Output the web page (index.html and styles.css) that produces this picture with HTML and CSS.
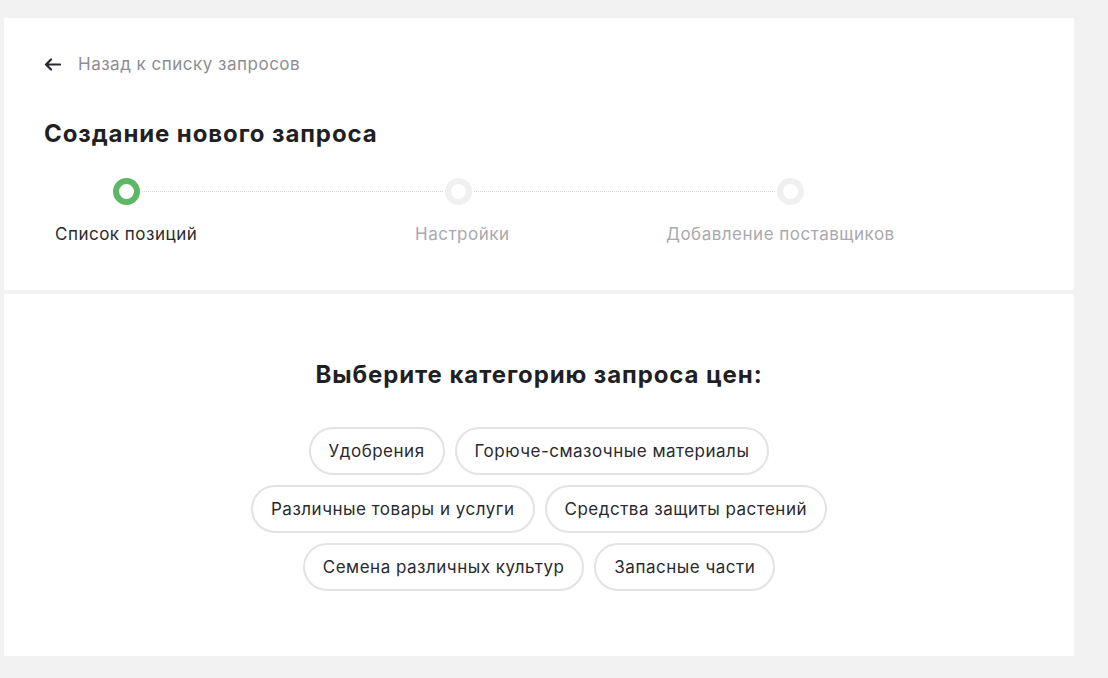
FILE: index.html
```html
<!DOCTYPE html>
<html lang="ru">
<head>
    <meta charset="UTF-8">
    <meta name="viewport" content="width=device-width, initial-scale=1.0">
    <title>Создание нового запроса</title>
    <link rel="stylesheet" href="styles.css">
</head>
<body>
    <div class="page">
        <div class="card card-top">
            <a class="back-link" href="#">
                <svg class="back-icon" width="17" height="13" viewBox="0 0 17 13">
                    <path d="M16 6.5H2M7 1.5L2 6.5l5 5" fill="none" stroke="#2b2533" stroke-width="2.2" stroke-linecap="round" stroke-linejoin="round"/>
                </svg>
                <span>Назад к списку запросов</span>
            </a>
            <h1 class="title">Создание нового запроса</h1>
            <div class="stepper">
                <div class="steps-track">
                    <span class="dot dot-active"></span>
                    <span class="track-line"></span>
                    <span class="dot"></span>
                    <span class="track-line"></span>
                    <span class="dot"></span>
                </div>
                <div class="steps-labels">
                    <span class="step-label step-label-active">Список позиций</span>
                    <span class="step-label">Настройки</span>
                    <span class="step-label">Добавление поставщиков</span>
                </div>
            </div>
        </div>

        <div class="card card-main">
            <h2 class="subtitle">Выберите категорию запроса цен:</h2>
            <div class="chips">
                <button class="chip">Удобрения</button>
                <button class="chip">Горюче-смазочные материалы</button>
                <button class="chip">Различные товары и услуги</button>
                <button class="chip">Средства защиты растений</button>
                <button class="chip">Семена различных культур</button>
                <button class="chip">Запасные части</button>
            </div>
        </div>
    </div>
</body>
</html>
```

FILE: styles.css
```css
body {
    margin: 0;
    background-color: #f2f2f2;
    font-family: Inter, "Noto Sans", sans-serif;
    color: #2a2a2e;
}
.page {
    width: 1070px;
    padding: 18px 0 0 4px;
    display: flex;
    flex-direction: column;
    gap: 4px;
}
.card {
    background-color: #fff;
}
.card-top {
    height: 272px;
    box-sizing: border-box;
    padding: 34px 40px 0;
}
.back-link {
    display: flex;
    align-items: center;
    gap: 17px;
    height: 24px;
    color: #8d8d92;
    text-decoration: none;
    font-size: 17px;
    letter-spacing: 0.5px;
}
.back-icon {
    display: block;
}
.title {
    margin: 43px 0 0;
    font-size: 24px;
    line-height: 30px;
    font-weight: 700;
    letter-spacing: 0.9px;
    color: #1f1f24;
}
.stepper {
    margin-top: 29px;
}
.steps-track {
    display: flex;
    align-items: center;
    width: 691px;
    margin-left: 69px;
}
.dot {
    width: 27px;
    height: 27px;
    box-sizing: border-box;
    border: 6px solid #f0f0f0;
    border-radius: 50%;
    flex-shrink: 0;
}
.dot-active {
    border-color: #5cb865;
}
.track-line {
    flex: 1;
    border-top: 1px dotted #d6d6d6;
    margin: 0 2px;
}
.steps-labels {
    display: grid;
    grid-template-columns: 360px 251px auto;
    margin: 17px 0 0 11px;
}
.step-label {
    font-size: 17px;
    line-height: 24px;
    letter-spacing: 0.5px;
    color: #a9a9ae;
}
.step-label-active {
    color: #2a2a2e;
}
.card-main {
    height: 362px;
    box-sizing: border-box;
    padding-top: 66px;
    display: flex;
    flex-direction: column;
    align-items: center;
}
.subtitle {
    margin: 0;
    font-size: 24px;
    line-height: 30px;
    font-weight: 700;
    letter-spacing: 0.9px;
    color: #1f1f24;
}
.chips {
    margin-top: 37px;
    max-width: 600px;
    display: flex;
    flex-wrap: wrap;
    justify-content: center;
    gap: 10px 10px;
}
.chip {
    height: 48px;
    padding: 0 18px;
    border: 2px solid #e3e3e3;
    border-radius: 24px;
    background-color: #fff;
    font-family: Inter, "Noto Sans", sans-serif;
    font-size: 17px;
    letter-spacing: 0.5px;
    color: #2a2a2e;
    cursor: pointer;
}
```
